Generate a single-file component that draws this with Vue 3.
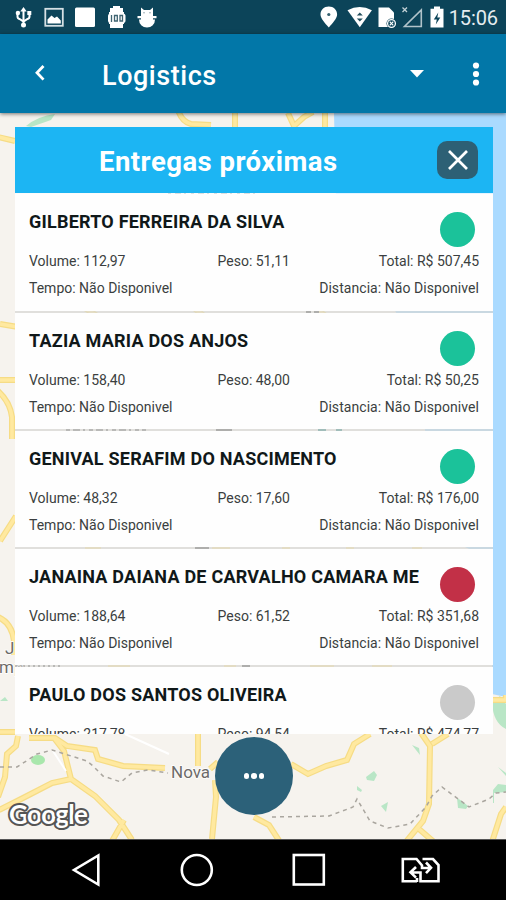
<script setup>
const deliveries = [
  { name: 'GILBERTO FERREIRA DA SILVA', volume: '112,97', weight: '51,11', total: '507,45', status: 'done' },
  { name: 'TAZIA MARIA DOS ANJOS', volume: '158,40', weight: '48,00', total: '50,25', status: 'done' },
  { name: 'GENIVAL SERAFIM DO NASCIMENTO', volume: '48,32', weight: '17,60', total: '176,00', status: 'done' },
  { name: 'JANAINA DAIANA DE CARVALHO CAMARA ME', volume: '188,64', weight: '61,52', total: '351,68', status: 'late' },
  { name: 'PAULO DOS SANTOS OLIVEIRA', volume: '217,78', weight: '94,54', total: '474,77', status: 'idle' },
]
const roads = 'M-2 137L15 141M178 110q4 12 13 14l20 1M235 127V112M288 113l6 13 10-9 9-5M325 111v16M0 324l18 3M0 380h18M-2 391q12 11 14 26v22M0 541L16 516M-2 617q14 6 16 24v14M0 732h15M18 736l-2 10-9 8-2 23-7 20M29 738h26l12 8 28 4 3 9 25 7 42 2M54 738l10 13 7 28-19 4-29 15-24 12M71 779l24 17 24 24 13 20M124 820l-12 21M198 734v32M218 762l-8 7M215 780l1 17-4 42M291 764l17 10 18-8 21-6 7-16 16-10M421 733l9 13-1 58-6 17-18 22M432 744l16-10M419 829l15 13M506 807l-5 7-9 28M254 817l15 8 11 17M492 700h14v-5M80 305l22 14M190 305l18 14M310 305l20 14M85 548h16M212 548h18M282 548h8M346 548h8M412 548h10M108 666h22M224 666h12M310 666h24M372 666h20'
</script>

<template>
  <div class="phone">
    <header class="status-bar">
      <svg class="status-icons" width="160" height="34" viewBox="0 0 160 34" fill="#fff">
        <!-- usb -->
        <path d="M23.500 9v16M17.500 13v3.500q0 2 2 2.500l4 2.500 4-2.500q2-.5 2-2.500V13" stroke="#fff" stroke-width="2" fill="none" />
        <path d="M23.500 7l3.200 4.500h-6.400z" />
        <circle cx="23.500" cy="25" r="2.500" /><circle cx="17.900" cy="13" r="2.200" /><rect x="27.300" y="11" width="4" height="4" />
        <!-- picture -->
        <rect x="45.300" y="8.800" width="17.500" height="17" fill="none" stroke="#d5e0e4" stroke-width="1.800" />
        <path d="M47.500 23.500v-4l4-4 3 2.500 2.500-1.500 3.800 4v3z" />
        <rect x="75" y="7.500" width="20" height="19.500" rx="1.500" />
        <!-- battery level -->
        <path d="M113 6h7v2h3v4h1v12h-1v4h-13v-4h-1V12h1V8h3z" />
        <rect x="108" y="13.500" width="17.500" height="9.500" rx="2.500" />
        <path d="M111.500 15v7M114.500 15.500h2.800v5.500h-2.800zM120 15.500h2.500v5.500H120z" fill="none" stroke="#3f6471" stroke-width="1.300" />
        <!-- android debugging -->
        <path d="M141 7.500l3 2.500h6l3-2.500v8.500h-12zM137.500 16h19v2.200h-19zM139 19.500h16q0 4-2.500 6-2 2-5.500 2t-5.500-2q-2.500-2-2.500-6z" />
        <rect x="141" y="15" width="12" height="6" />
        <circle cx="144" cy="12.800" r=".7" fill="#7b939c" /><circle cx="150" cy="12.800" r=".7" fill="#7b939c" />
      </svg>
      <svg class="status-icons" width="130" height="34" viewBox="318 0 130 34" fill="#fff">
        <path d="M328.800 6.500c-4.800 0-8.300 3.400-8.300 8 0 4 4.500 8.500 8.300 13 3.800-4.500 8.300-9 8.300-13 0-4.600-3.500-8-8.300-8z" />
        <circle cx="328.800" cy="14.500" r="1.600" fill="#35606f" />
        <path d="M347.500 10.300q12.200-6.500 24.400 0L359.800 27.300z" />
        <path d="M356.800 15.500l3-3 3 3zM356.800 18.500l3 3 3-3z" fill="#244f5e" />
        <path d="M378.500 7.500h10.500l5 5V27h-15.500z" />
        <circle cx="391.500" cy="23.500" r="5" fill="#0c4459" /><circle cx="391.500" cy="23.500" r="3.900" fill="none" stroke="#fff" stroke-width="1.300" />
        <path d="M389.700 21.700l3.600 3.600m0-3.600l-3.600 3.600" stroke="#fff" stroke-width="1.200" />
        <path d="M404.500 26.500H421.300V10z" fill="none" stroke="#b1c3ca" stroke-width="1.600" />
        <path d="M402.500 7.500l4.500 4.500m0-4.500l-4.500 4.500" stroke="#c3d1d6" stroke-width="1.300" />
        <path d="M434 6.500h6v2.300h3.500V27.500h-13V8.800h3.500z" />
        <path d="M438.300 12.500l-4.500 7h3l-1 5 4.500-7h-3z" fill="#0c4459" />
      </svg>
      <span class="clock">15:06</span>
    </header>

    <nav class="app-bar">
      <svg class="back" width="14" height="20" viewBox="0 0 14 20"><path d="M10.500 3L4 9.800l6.500 6.800" fill="none" stroke="#fff" stroke-width="2.800" /></svg>
      <h1>Logistics</h1>
      <svg class="caret" width="14" height="8" viewBox="0 0 14 8"><path d="M0 0h14L7 7.500z" fill="#fff" /></svg>
      <svg class="more" width="8" height="26" viewBox="0 0 8 26" fill="#fff"><circle cx="4" cy="4.500" r="3.100" /><circle cx="4" cy="13" r="3.100" /><circle cx="4" cy="21.500" r="3.100" /></svg>
    </nav>

    <main class="stage">
      <svg class="map" width="506" height="726" viewBox="0 113 506 726">
        <rect y="113" width="506" height="726" fill="#f6f3ee" />
        <path d="M334 113H506V697l-14-3V560L440 535 425 430 400 320 336 200z" fill="#aadaff" />
        <g fill="#b9e6c6">
          <path d="M26 126q12-10 29-12l-4 6-20 7zM492 702l8-6 6 8v25q-13-6-14-27zM0 701l5-4 3 4zM412 745l7 3 1 7zM366 777l8-6 3 4-3 6-7-1zM357 786l5 4-1 2-4-2zM381 806l7-4-2 10zM457 798l5 3 6 5-2 3-8-1zM493 790l5-6 8 1v7l-12 1v10h-1zM498 767l8 6v3z" />
          <ellipse cx="38" cy="760" rx="7" ry="5" fill="#a9e7ac" />
        </g>
        <path :d="roads" fill="none" stroke="#f6dc85" stroke-width="6" />
        <path :d="roads" fill="none" stroke="#ffe9a0" stroke-width="3.600" />
        <path d="M125 734l44 20M53 751l13 20" fill="none" stroke="#fff" stroke-width="2" />
        <path d="M0 767h17l20-13 15-4 35 11 6 5 10 10 18 6 11-9 16-3 20 3M272 817l57-1 24-9 4-8 13 22 18 7 22-4 16-17 6-11 10-9 27 20 20-8 7-6 10-1" fill="none" stroke="#aaa69f" stroke-width="1.500" stroke-dasharray="4 4" />
        <!-- place labels that show through the gaps between rows -->
        <g fill="none" stroke="#555" stroke-width="3">
          <path d="M168 194h92" stroke-dasharray="3 4 6 3 2 5" stroke="#999" />
          <path d="M66 430.500h80" stroke-dasharray="4 3 7 3 2 4" stroke="#777" />
          <path d="M216 430.500h16M195 548.500h14M242 666.500h8M306 312.500h5M314 312.500h5" />
          <path d="M318 430.500h8M336 430.500h6" stroke="#2c8580" />
          <path d="M18 666.500h42" stroke-dasharray="2 3" stroke="#777" />
        </g>
        <g class="place">
          <text x="5" y="654">J</text><text x="-1" y="673">mp</text><text x="171" y="778">Nova</text>
        </g>
        <text class="google" x="9" y="824" textLength="79">Google</text>
      </svg>

      <section class="panel">
        <header class="panel-head">
          <h2>Entregas próximas</h2>
          <button class="close" aria-label="Fechar"><svg width="22" height="22" viewBox="0 0 22 22"><path d="M2 2l18 18M20 2L2 20" stroke="#fff" stroke-width="2.700" /></svg></button>
        </header>
        <ul>
          <li v-for="d in deliveries" :key="d.name">
            <h3>{{ d.name }}</h3>
            <i class="dot" :class="d.status"></i>
            <div class="line figures"><span>Volume: {{ d.volume }}</span><span>Peso: {{ d.weight }}</span><span>Total: R$ {{ d.total }}</span></div>
            <div class="line"><span>Tempo: Não Disponivel</span><span class="distance">Distancia: Não Disponivel</span></div>
          </li>
        </ul>
      </section>

      <button class="fab" aria-label="Mais"><i></i><i></i><i></i></button>
    </main>

    <footer class="nav-bar">
      <svg width="506" height="61" viewBox="0 839 506 61" fill="none" stroke="#fff" stroke-width="2.600">
        <path d="M98.300 855.500v29L74 870z" />
        <circle cx="196.800" cy="870" r="15" />
        <rect x="293.800" y="855" width="30" height="29.500" />
        <path d="M417 881.300H402.800V859H416.500l5.500 6.500v2.500h8M426 862.500l5 5.300-5 5.300M422.500 859H433l5.500 6V881.300H420.500V872.500H411M416 867l-5.500 5.300 5.500 5.300M417 882v-4" />
      </svg>
    </footer>
  </div>
</template>

<style>
body { margin: 0; }
</style>

<style scoped>
* { box-sizing: border-box; }
.phone { width: 506px; height: 900px; display: flex; flex-direction: column; overflow: hidden; font-family: Roboto, "Liberation Sans", sans-serif; }
h1, h2, h3, ul { margin: 0; padding: 0; }
button { border: 0; padding: 0; }
svg { display: block; flex: none; }
.status-bar { height: 34px; flex: none; display: flex; background: #0c4459; justify-content: space-between; padding-right: 8px; }
.status-icons:nth-child(2) { margin-left: auto; }
.clock { width: 50px; color: #e5edf0; font-size: 20px; line-height: 36px; text-align: right; white-space: nowrap; letter-spacing: -.1px; }
.app-bar { height: 79px; flex: none; display: flex; align-items: center; background: #0277a8; padding: 0 26px 0 33px; box-shadow: 0 1px 4px #0008; z-index: 1; }
.back { margin-top: -2px; }
h1 { margin: 4px auto 0 55px; color: #fff; font-size: 27px; font-weight: 500; line-height: 36px; letter-spacing: .55px; }
.caret { margin-right: 48px; }
.stage { height: 726px; flex: none; display: grid; }
.stage > * { grid-area: 1 / 1; }
.place { font-size: 17px; fill: #6d6a68; stroke: #fff; stroke-width: 1.500px; paint-order: stroke; }
.google { font-family: Lato, sans-serif; font-size: 26px; font-weight: 700; fill: #fff; stroke: #555; stroke-width: 4px; paint-order: stroke; stroke-linejoin: round; }
.panel { z-index: 1; width: 478px; height: 607px; margin: 14px 0 0 15px; overflow: hidden; }
.panel-head { height: 66px; background: #1cb5f3; display: flex; align-items: center; justify-content: space-between; padding: 0 15px 0 84px; }
h2 { color: #fff; font-size: 27.500px; font-weight: 700; line-height: 36px; margin-top: 3px; white-space: nowrap; letter-spacing: .47px; }
.close { width: 41px; height: 38px; border-radius: 10px; background: #2d6075; display: grid; place-items: center; }
ul { list-style: none; }
li { height: 118px; display: grid; grid-template-columns: 1fr 39px; grid-template-rows: 53px 27px 27px; background: #fefefe; background-clip: padding-box; border-bottom: 2px solid #d6d6d4b0; padding: 0 14px; }
li:first-child { height: 120px; border-top: 1px solid #ffffffb0; }
h3 { color: #101819; font-size: 18px; font-weight: 700; line-height: 20px; padding-top: 18px; white-space: nowrap; letter-spacing: .22px; }
.dot { width: 35px; height: 35px; border-radius: 50%; margin-top: 18px; }
.done { background: #1bc29a; }
.late { background: #c23047; }
.idle { background: #cacaca; }
.line { grid-column: 1 / 3; display: flex; justify-content: space-between; align-items: center; color: #3b3f40; font-size: 14px; line-height: 20px; }
.figures { display: grid; grid-template-columns: 188.500px 1fr auto; }
.distance { letter-spacing: .06px; }
.fab { z-index: 2; width: 78px; height: 78px; border-radius: 50%; background: #2c6179; margin: 624px 0 0 215px; display: flex; align-items: center; justify-content: center; gap: 2px; }
.fab i { width: 5.500px; height: 5.500px; border-radius: 50%; background: #fff; }
.nav-bar { height: 61px; flex: none; background: #000; border-top: 1px solid #555; }
.nav-bar svg { margin-top: -1px; }
</style>
